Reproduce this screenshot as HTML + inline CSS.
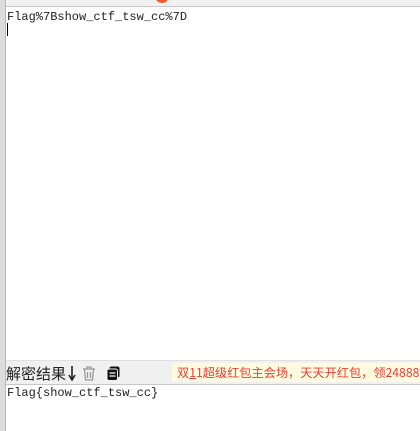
<!DOCTYPE html><html><head><style>
body{margin:0;width:420px;height:431px;overflow:hidden;background:#fff;position:relative;font-family:"Liberation Mono",monospace}
.ls{position:absolute;left:0;top:0;width:5px;height:431px;background:#dcdcdc;border-right:1px solid #b8b8b8}
.top{position:absolute;left:6px;top:0;width:414px;height:6px;background:#f0f0f0;border-bottom:1px solid #c8c8c8}
.dot{position:absolute;left:150px;top:-6px;width:12px;height:9px;border-radius:50%;background:#f05a28}
.t1{position:absolute;left:7px;top:10px;font-size:12px;color:#222}
.cur{position:absolute;left:7px;top:23px;width:1px;height:13px;background:#000}
.tb{position:absolute;left:6px;top:360px;width:414px;height:23px;background:#f0f0f0;border-top:1px solid #e0e0e0;border-bottom:1px solid #c8c8c8}
.lbl{position:absolute;left:0;top:2px;font:15px "Noto Sans CJK SC",sans-serif;color:#222;white-space:nowrap}
.ad{position:absolute;left:166px;top:2px;height:19px;width:250px;background:#fffbe0;font:12.2px "Noto Sans CJK SC",sans-serif;color:#f03c32;line-height:19px;padding-left:5px;white-space:nowrap;overflow:hidden}
.t2{position:absolute;left:7px;top:386px;font-size:12px;color:#222}
</style></head><body>
<div class="ls"></div><div class="top"><div class="dot"></div></div>
<div class="t1">Flag%7Bshow_ctf_tsw_cc%7D</div><div class="cur"></div>
<div class="tb"><div class="lbl">解密结果<svg width="8" height="16" viewBox="0 0 8 16" style="vertical-align:-2px;margin-left:2px"><path d="M4 1v13M1 10l3 5 3-5" fill="none" stroke="#222" stroke-width="1.6"/></svg>
<svg width="14" height="15" viewBox="0 0 14 15" style="vertical-align:-2px;margin-left:3px"><path d="M1 3h12M5 3V1h4v2M2.5 3.5l1 10.5h7l1-10.5M5.5 6v6M8.5 6v6" fill="none" stroke="#999" stroke-width="1.3"/></svg>
<svg width="15" height="15" viewBox="0 0 14 15" style="vertical-align:-2px;margin-left:6px"><rect x="3" y="0.5" width="10" height="11" rx="2" fill="#111"/><rect x="0.5" y="3" width="10.5" height="11.5" rx="2" fill="#111" stroke="#f0f0f0" stroke-width="1"/><path d="M3 7h6M3 10h6" stroke="#fff" stroke-width="1.3"/></svg></div>
<div class="ad">双<u>1</u>1超级红包主会场，天天开红包，领24888元</div></div>
<div class="t2">Flag{show_ctf_tsw_cc}</div>
</body></html>
